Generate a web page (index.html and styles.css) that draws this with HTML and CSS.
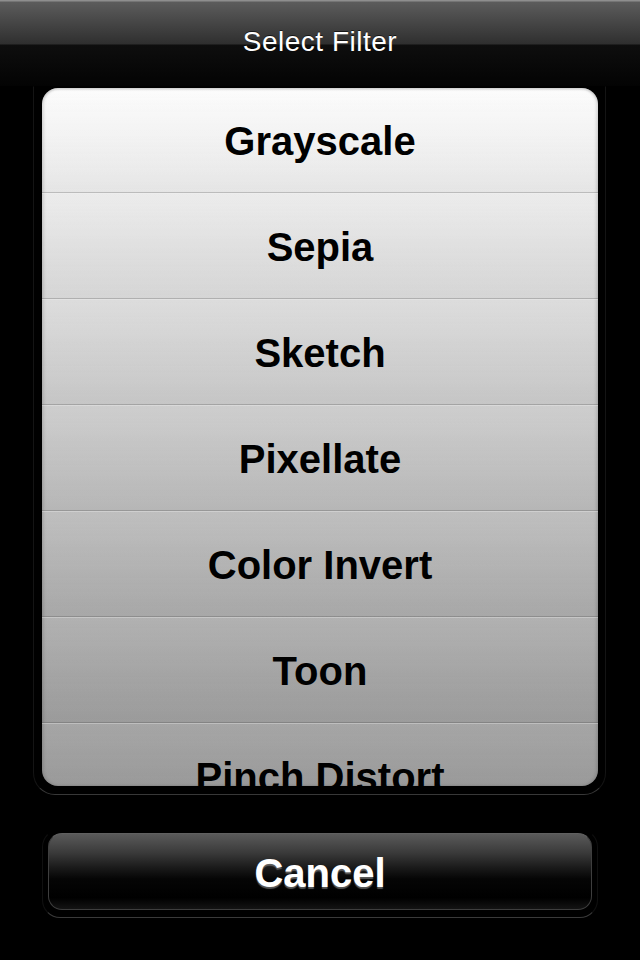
FILE: index.html
```html
<!DOCTYPE html>
<html>
<head>
<meta charset="utf-8">
<link rel="stylesheet" href="styles.css">
</head>
<body>
<div class="screen">
  <header class="titlebar">
    <h1 class="title">Select Filter</h1>
  </header>
  <div class="list-frame">
    <ul class="list">
      <li class="row">Grayscale</li>
      <li class="row">Sepia</li>
      <li class="row">Sketch</li>
      <li class="row">Pixellate</li>
      <li class="row">Color Invert</li>
      <li class="row">Toon</li>
      <li class="row">Pinch Distort</li>
    </ul>
  </div>
  <div class="button-frame">
    <button class="cancel">Cancel</button>
  </div>
</div>
</body>
</html>
```

FILE: styles.css
```css
html, body {
  margin: 0;
  padding: 0;
  background: #000;
}

.screen {
  width: 640px;
  height: 960px;
  overflow: hidden;
  background: #000;
  font-family: "Liberation Sans", Arial, Helvetica, sans-serif;
  display: flex;
  flex-direction: column;
}

.titlebar {
  height: 86px;
  box-sizing: border-box;
  padding-top: 26px;
  background: linear-gradient(to bottom,
    #8e8e8e 0px, #8e8e8e 1px,
    #5c5c5c 2px, #2f2f2f 44px,
    #0e0e0e 45px, #030303 86px);
  text-align: center;
}

.title {
  margin: 0;
  font-size: 28px;
  line-height: 32px;
  font-weight: normal;
  letter-spacing: 0.5px;
  color: #fff;
  text-shadow: 0 -1px 0 rgba(0, 0, 0, 0.6);
}

.list-frame {
  margin: 0 34px 0 33px;
  padding: 1px 7px 8px 8px;
  border: 1px solid #141414;
  border-bottom-color: #383838;
  border-top-color: transparent;
  border-radius: 0 0 22px 22px;
}

.list {
  list-style: none;
  margin: 0;
  padding: 0;
  height: 698px;
  overflow: hidden;
  border-radius: 16px;
  background: linear-gradient(to bottom, #fcfcfc 0%, #e4e4e4 20%, #cdcdcd 42%, #b4b4b4 66%, #a2a2a2 85%, #989898 100%);
  box-shadow: inset 2px 0 3px rgba(0, 0, 0, 0.12), inset -2px 0 3px rgba(0, 0, 0, 0.12), inset 0 2px 2px rgba(0, 0, 0, 0.1);
}

.row {
  height: 104px;
  display: flex;
  align-items: center;
  justify-content: center;
  padding-top: 2px;
  box-sizing: border-box;
  font-size: 40px;
  font-weight: bold;
  color: #000;
  border-bottom: 1px solid rgba(0, 0, 0, 0.2);
  background: linear-gradient(to bottom, rgba(255, 255, 255, 0.08), rgba(0, 0, 0, 0.02));
}

.row:first-child {
  height: 105px;
}

.row + .row {
  border-top: 1px solid rgba(255, 255, 255, 0.35);
  height: 106px;
}

.button-frame {
  margin: 34px 42px 0 42px;
  padding: 3px 5px 7px 5px;
  border: 1px solid transparent;
  border-left-color: #101010;
  border-right-color: #101010;
  border-bottom-color: #3a3a3a;
  border-radius: 18px;
  display: flex;
}

.cancel {
  flex: 1;
  height: 77px;
  margin: 0;
  padding: 3px 0 0 0;
  border: 1px solid #3e3e3e;
  border-top-color: #606060;
  border-radius: 14px;
  background: linear-gradient(to bottom, #5a5a5a 0%, #3a3a3a 25%, #1a1a1a 45%, #050505 60%, #000 85%, #141414 100%);
  color: #fff;
  font-family: "Liberation Sans", Arial, Helvetica, sans-serif;
  font-size: 40px;
  font-weight: bold;
  text-shadow: 0 2px 1px rgba(110, 110, 110, 0.8);
}
```
